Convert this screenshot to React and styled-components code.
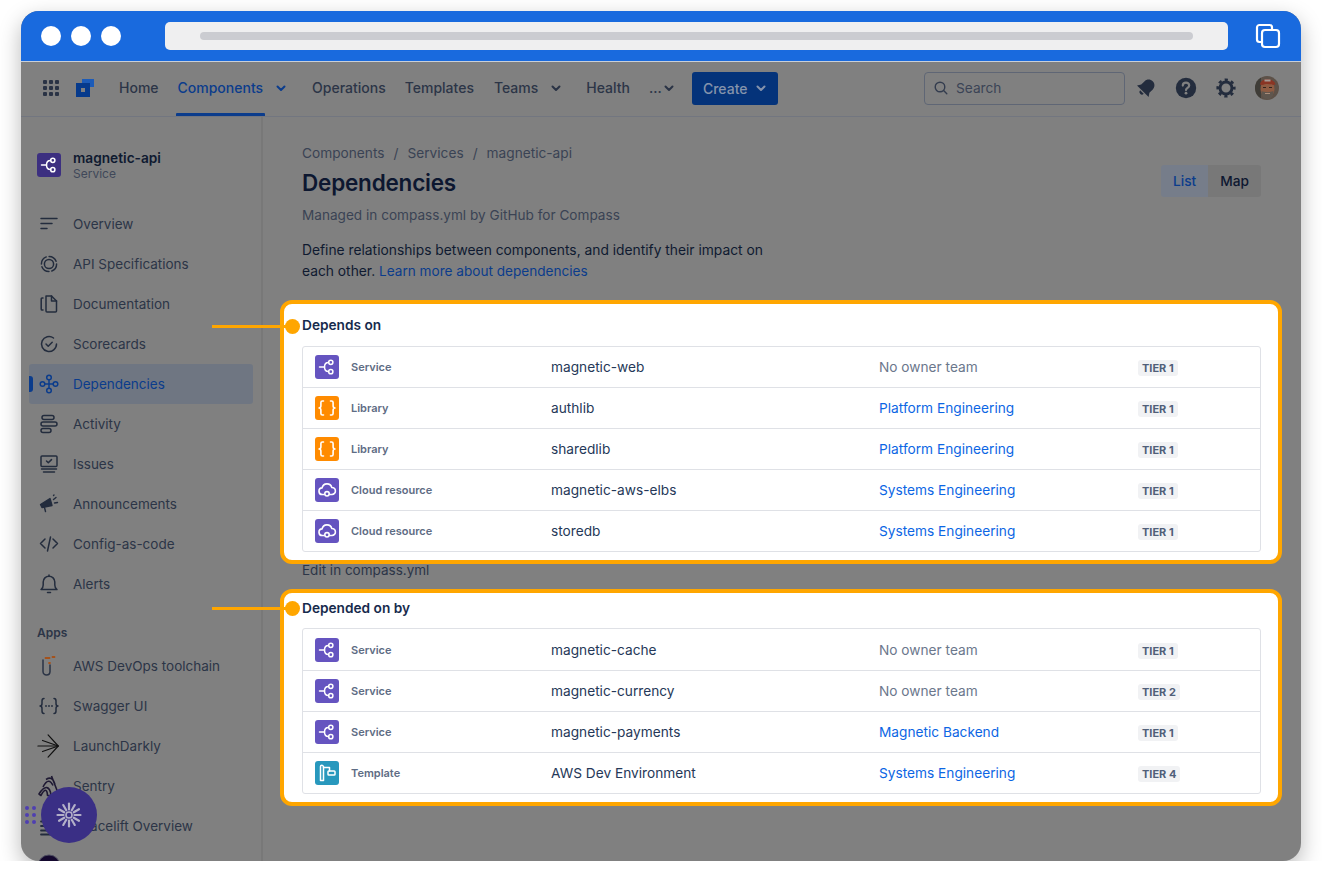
import React from 'react';
import styled, { createGlobalStyle } from 'styled-components';

const GlobalStyle = createGlobalStyle`
  html, body { margin: 0; padding: 0; background: #fff; }
  body { font-family: Inter, "Liberation Sans", sans-serif; -webkit-font-smoothing: antialiased; }
  * { box-sizing: border-box; }
`;

const ORANGE = '#FFA600';

/* icons */
const Svg = ({ size = 20, vb = '0 0 20 20', children, color = 'currentColor' }) => (
  <svg width={size} height={size} viewBox={vb} fill="none" stroke={color} strokeWidth="1.5" strokeLinecap="round" strokeLinejoin="round">
    {children}
  </svg>
);

const Chevron = ({ color = '#2A3345' }) => (
  <svg width="10" height="7" viewBox="0 0 10 7" fill="none" stroke={color} strokeWidth="2" strokeLinecap="round" strokeLinejoin="round">
    <path d="M1.5 1.5 5 5l3.5-3.5" />
  </svg>
);

const GridIcon = () => (
  <svg width="16" height="16" viewBox="0 0 16 16" fill="#2A3345">
    {[0, 6, 12].flatMap(y => [0, 6, 12].map(x => <rect key={`${x}-${y}`} x={x} y={y} width="4" height="4" rx="1" />))}
  </svg>
);

const LogoIcon = () => (
  <svg width="18" height="18" viewBox="0 0 18 18">
    <path fill="#063A8C" d="M0 4h14v14H0zM5 9v4h4V9z" fillRule="evenodd" />
    <path fill="#1C5BB8" d="M6 0h12v8h-4V4H6z" />
  </svg>
);

const CopyIcon = () => (
  <svg width="26" height="26" viewBox="0 0 26 26" fill="none" stroke="#fff" strokeWidth="2.2">
    <rect x="7" y="7" width="17" height="17" rx="3" />
    <path d="M7 19H4.5A2.5 2.5 0 0 1 2 16.500V4.500A2.500 2.500 0 0 1 4.500 2h10A2.500 2.500 0 0 1 17 4.500V7" />
  </svg>
);

const SearchIcon = () => (
  <svg width="14" height="14" viewBox="0 0 14 14" fill="none" stroke="#333C4E" strokeWidth="1.4" strokeLinecap="round">
    <circle cx="6" cy="6" r="4.8" />
    <path d="m9.600 9.600 3.200 3.200" />
  </svg>
);

const NavBell = () => (
  <svg width="20" height="20" viewBox="0 0 20 20" fill="#232C3D">
    <g transform="rotate(45 10 10)">
      <path d="M10 0.500c3.600 0 5.800 2.800 5.800 6v4.500l2.400 3.500H1.800L4.200 11V6.500c0-3.200 2.200-6 5.800-6z" />
      <path d="M7.500 15.800h5a2.500 2.500 0 0 1-5 0z" />
    </g>
  </svg>
);

const HelpIcon = () => (
  <svg width="22" height="22" viewBox="0 0 22 22">
    <circle cx="11" cy="11" r="10.200" fill="#232C3D" />
    <path d="M7.800 8.600c0-1.900 1.400-3 3.200-3s3.200 1.100 3.200 2.800c0 2.500-3.200 2.400-3.200 4.700" fill="none" stroke="#808080" strokeWidth="2.200" strokeLinecap="round" />
    <circle cx="11" cy="16.200" r="1.400" fill="#808080" />
  </svg>
);

const GearIcon = () => (
  <svg width="20" height="20" viewBox="0 0 20 20" fill="none" stroke="#232C3D">
    <circle cx="10" cy="10" r="6" strokeWidth="3" />
    <circle cx="10" cy="10" r="8.300" strokeWidth="2.600" strokeDasharray="3.200 3.320" strokeDashoffset="1.600" />
  </svg>
);

const Avatar = () => (
  <svg width="24" height="24" viewBox="0 0 24 24">
    <clipPath id="avatarClip"><circle cx="12" cy="12" r="12" /></clipPath>
    <g clipPath="url(#avatarClip)">
      <rect width="24" height="24" fill="#5d5148" />
      <path d="M0 0h6v24H0z" fill="#3f3d38" />
      <ellipse cx="12.500" cy="13" rx="7" ry="9" fill="#8f5b42" />
      <path d="M5 8.500C5.500 2 19 1 20.500 8.500L18 9c-3-1.500-8-1.500-10.500 0z" fill="#8a3524" />
      <path d="M9.500 3.500h6v2h-6z" fill="#a59a94" />
      <path d="M6.500 15c2.500 1.500 9.500 1.500 12 0 0 5-2 8-6 8s-6-3-6-8z" fill="#5f564e" />
      <path d="M10 17.500h5" stroke="#a98b78" strokeWidth="1.200" />
      <path d="M8 11.500h3M14 11.500h3" stroke="#33241e" strokeWidth="1" />
    </g>
  </svg>
);

const BranchGlyph = ({ color = '#fff', w = 1.5 }) => (
  <g fill="none" stroke={color} strokeWidth={w} strokeLinecap="round" strokeLinejoin="round">
    <path d="M4.500 12H9.500" />
    <path d="M13.500 7.500c-2.200 0-4 1.800-4 4.500s1.800 4.500 4 4.500" />
    <circle cx="15.800" cy="7.300" r="2.100" />
    <circle cx="15.800" cy="16.700" r="2.100" />
  </g>
);

const TileBox = styled.span`
  display: inline-flex;
  flex: none;
  width: 24px;
  height: 24px;
  border-radius: 3px;
  background: ${p => p.$bg};
`;

const Tile = ({ kind, bg }) => {
  const colors = { service: '#6554C0', library: '#FF8B00', cloud: '#6554C0', template: '#2898BD' };
  return (
    <TileBox $bg={bg || colors[kind]}>
      <svg width="24" height="24" viewBox="0 0 24 24">
        {kind === 'service' && <BranchGlyph />}
        {kind === 'library' && (
          <g fill="none" stroke="#fff" strokeWidth="1.600" strokeLinecap="round" strokeLinejoin="round">
            <path d="M8.500 5H7.400c-1 0-1.500.6-1.500 1.500v3.300c0 1.200-.7 2.200-1.900 2.200 1.200 0 1.900 1 1.900 2.200v3.300c0 .9.500 1.500 1.500 1.500h1.100" />
            <path d="M15.500 5h1.100c1 0 1.500.6 1.500 1.500v3.300c0 1.200.7 2.200 1.900 2.200-1.200 0-1.900 1-1.900 2.200v3.300c0 .9-.5 1.500-1.500 1.500h-1.100" />
          </g>
        )}
        {kind === 'cloud' && (
          <g fill="none" stroke="#fff" strokeWidth="1.600" strokeLinecap="round" strokeLinejoin="round">
            <path d="M9 16.500H7.500a3.300 3.300 0 0 1-.4-6.600 5 5 0 0 1 9.700-.4 3.500 3.500 0 0 1 .2 7H15" />
            <circle cx="12" cy="15.800" r="2.200" />
          </g>
        )}
        {kind === 'template' && (
          <g fill="none" stroke="#fff" strokeWidth="1.500" strokeLinecap="round" strokeLinejoin="round">
            <path d="M5.500 5.500c0-.8.600-1.300 1.300-1.300s1.300.5 1.700 1.300v14h-3z" />
            <path d="M8.500 6.500h6v3.500" />
            <rect x="13" y="10" width="7" height="4" rx=".8" />
          </g>
        )}
      </svg>
    </TileBox>
  );
};

const sideIcons = {
  overview: <Svg><path d="M2 4.500h16M2 9.500h11M2 14.500h6" /></Svg>,
  api: <Svg><circle cx="10" cy="10" r="4.600" /><circle cx="10" cy="10" r="7.600" strokeDasharray="9 2.900" /></Svg>,
  docs: <Svg><path d="M7 2h5.500L17.500 7v10a1 1 0 0 1-1 1H8a1 1 0 0 1-1-1z" /><path d="M12.500 2V7h5" /><path d="M4 4H3a.8.8 0 0 0-.8.800v10.400c0 .5.400.8.800.8h1" /></Svg>,
  score: <Svg><path d="M17.500 10a7.500 7.500 0 1 1-3-6" /><path d="m7 10 2.200 2.200 4-4" /></Svg>,
  deps: (
    <Svg color="#0B3C8C">
      <circle cx="10" cy="3.500" r="2.300" /><circle cx="3.500" cy="10" r="2.300" /><circle cx="16.500" cy="10" r="2.300" /><circle cx="10" cy="16.500" r="2.300" />
      <path d="M10 5.800v8.400M5.800 10h8.400" />
    </Svg>
  ),
  activity: <Svg><rect x="3" y="1.500" width="12" height="4" rx="2" /><rect x="2" y="8" width="16" height="4" rx="2" /><rect x="2" y="14.500" width="10" height="4" rx="2" /></Svg>,
  issues: (
    <Svg>
      <rect x="2" y="2" width="16" height="10.500" rx="1" />
      <path d="m7.500 7 1.800 1.800 3.200-3.200M2.500 15h15M4.500 18h11" />
    </Svg>
  ),
  announce: (
    <svg width="20" height="20" viewBox="0 0 20 20" fill="#232C3D" stroke="#232C3D" strokeWidth="1.400" strokeLinecap="round" strokeLinejoin="round">
      <path d="M1.500 10.500 11 4.500l2 7-10 2z" />
      <path d="m5.500 13.500 1 4" fill="none" />
      <path d="M14.500 5.500 17 3.500M15.500 9l3-.5M14.500 1.500l.5-.5" fill="none" />
    </svg>
  ),
  config: <Svg><path d="M6 5 1.500 9.500 6 14M14 5l4.500 4.500L14 14M11.500 3l-3 14" /></Svg>,
  alerts: <Svg><path d="M2 15.500c1.500-1 2.200-2.500 2.200-4.500V8a5.800 5.800 0 0 1 11.600 0v3c0 2 .7 3.500 2.200 4.500z" /><path d="M10 1v1M8.500 18.500h3" /></Svg>,
  aws: (
    <Svg>
      <path d="M4 4v11.500a3.500 3.500 0 0 0 3.500 3.500c2 0 3.500-1.500 3.500-3.500V9" stroke="#2A3345" />
      <path d="M6.500 2h4M13.500 1h2M10 7h1" stroke="#A5521B" strokeWidth="1.800" />
    </Svg>
  ),
  swagger: (
    <Svg>
      <path d="M5 2.500c-2 0-2 1-2 2.500v2.500C3 9 2 10 1 10c1 0 2 1 2 2.500V15c0 1.500 0 2.500 2 2.500M15 2.500c2 0 2 1 2 2.500v2.500c0 1.500 1 2.500 2 2.500-1 0-2 1-2 2.500V15c0 1.500 0 2.500-2 2.500" />
      <path d="M7 10h.01M10 10h.01M13 10h.01" strokeWidth="1.800" />
    </Svg>
  ),
  launch: (
    <svg width="26" height="26" viewBox="0 0 26 26" fill="none" stroke="#111" strokeWidth="1.300" strokeLinecap="round" strokeLinejoin="round">
      <path d="M1 13h22" /><path d="M12 1l11 12-11 12" /><path d="M6 7l17 6-17 6" />
    </svg>
  ),
  sentry: (
    <svg width="22" height="22" viewBox="0 0 22 22" fill="none" stroke="#1F1A33" strokeWidth="1.600" strokeLinejoin="round">
      <path d="M1 19l2 1.500c3-6 6-8 6.500 0H13C12 11 7 9.500 1 19z" />
      <path d="M13.500 1 21 20.500h-5M5 12C9 4 12.500 5 15 10.500M8 4.500c4-2.500 7-2 9 5" />
    </svg>
  ),
  spacelift: <Svg><path d="M2 5.500h16M2 10h16M2 14.500h16M2 18.500h16" strokeWidth="1.800" /></Svg>,
  last: (
    <svg width="24" height="24" viewBox="0 0 24 24"><circle cx="12" cy="12" r="11" fill="#14082E" stroke="#4d4d60" /></svg>
  ),
};

const mainItems = [
  ['overview', 'Overview'], ['api', 'API Specifications'], ['docs', 'Documentation'], ['score', 'Scorecards'],
  ['deps', 'Dependencies', true], ['activity', 'Activity'], ['issues', 'Issues'], ['announce', 'Announcements'],
  ['config', 'Config-as-code'], ['alerts', 'Alerts'],
];
const appItems = [
  ['aws', 'AWS DevOps toolchain'], ['swagger', 'Swagger UI'], ['launch', 'LaunchDarkly'], ['sentry', 'Sentry'],
  ['spacelift', 'Spacelift Overview'], ['last', ''],
];

const dependsOn = [
  ['service', 'Service', 'magnetic-web', 'No owner team', 'TIER 1'],
  ['library', 'Library', 'authlib', 'Platform Engineering', 'TIER 1'],
  ['library', 'Library', 'sharedlib', 'Platform Engineering', 'TIER 1'],
  ['cloud', 'Cloud resource', 'magnetic-aws-elbs', 'Systems Engineering', 'TIER 1'],
  ['cloud', 'Cloud resource', 'storedb', 'Systems Engineering', 'TIER 1'],
];
const dependedOnBy = [
  ['service', 'Service', 'magnetic-cache', 'No owner team', 'TIER 1'],
  ['service', 'Service', 'magnetic-currency', 'No owner team', 'TIER 2'],
  ['service', 'Service', 'magnetic-payments', 'Magnetic Backend', 'TIER 1'],
  ['template', 'Template', 'AWS Dev Environment', 'Systems Engineering', 'TIER 4'],
];

const DepTable = ({ rows, firstRow = 40 }) => (
  <Table>
    {rows.map(([kind, type, name, team, tier]) => (
      <Row key={name} $first={firstRow}>
        <TypeCell><Tile kind={kind} /><TypeLabel>{type}</TypeLabel></TypeCell>
        <NameCell>{name}</NameCell>
        <TeamCell $none={team === 'No owner team'}>{team}</TeamCell>
        <TierCell><TierBadge>{tier}</TierBadge></TierCell>
      </Row>
    ))}
  </Table>
);

const App = () => (
  <>
    <GlobalStyle />
    <Window>
      <BrowserBar>
        <Dots><Dot /><Dot /><Dot /></Dots>
        <AddressBar><AddressFill /></AddressBar>
        <CopyIcon />
      </BrowserBar>

      <TopNav>
        <GridIcon />
        <LogoSlot><LogoIcon /></LogoSlot>
        <NavItem $left={25}>Home</NavItem>
        <NavItem $left={19} $active>Components<Underline /></NavItem>
        <ChevSlot $left={13}><Chevron color="#0B3C8C" /></ChevSlot>
        <NavItem $left={26}>Operations</NavItem>
        <NavItem $left={19}>Templates</NavItem>
        <NavItem $left={20}>Teams</NavItem>
        <ChevSlot $left={13}><Chevron /></ChevSlot>
        <NavItem $left={25}>Health</NavItem>
        <NavItem $left={19}>...</NavItem>
        <ChevSlot $left={2}><Chevron /></ChevSlot>
        <CreateButton>Create <Chevron color="#8593AC" /></CreateButton>
        <SearchBox><SearchIcon /><span>Search</span></SearchBox>
        <NavIcons>
          <NavBell />
          <HelpIcon />
          <GearIcon />
          <Avatar />
        </NavIcons>
      </TopNav>

      <Body>
        <Sidebar>
          <SideHeader>
            <Tile kind="service" bg="#3C2F80" />
            <div>
              <SideName>magnetic-api</SideName>
              <SideType>Service</SideType>
            </div>
          </SideHeader>
          {mainItems.map(([icon, label, active]) => (
            <SideItem key={label} $active={active}>
              <SideIcon>{sideIcons[icon]}</SideIcon>
              {label}
            </SideItem>
          ))}
          <SideSection>Apps</SideSection>
          {appItems.map(([icon, label]) => (
            <SideItem key={icon}>
              <SideIcon>{sideIcons[icon]}</SideIcon>
              {label}
            </SideItem>
          ))}
        </Sidebar>

        <Content>
          <Breadcrumbs>
            <span>Components</span><i>/</i><span>Services</span><i>/</i><span>magnetic-api</span>
          </Breadcrumbs>
          <TitleRow>
            <Title>Dependencies</Title>
            <Toggle>
              <ToggleBtn $on>List</ToggleBtn>
              <ToggleBtn>Map</ToggleBtn>
            </Toggle>
          </TitleRow>
          <Managed>Managed in compass.yml by GitHub for Compass</Managed>
          <Intro>
            Define relationships between components, and identify their impact on<br />
            each other. <IntroLink>Learn more about dependencies</IntroLink>
          </Intro>

          <HighlightCard $top={18}>
            <Callout $top={14.5} />
            <SectionTitle>Depends on</SectionTitle>
            <DepTable rows={dependsOn} />
          </HighlightCard>
          <EditLink>Edit in compass.yml</EditLink>
          <HighlightCard $top={13}>
            <Callout $top={7.5} />
            <SectionTitle $tight>Depended on by</SectionTitle>
            <DepTable rows={dependedOnBy} firstRow={41} />
          </HighlightCard>
        </Content>
      </Body>

      <FloatWrap>
        <DragDots>{Array.from({ length: 6 }, (_, i) => <i key={i} />)}</DragDots>
        <FloatButton>
          <svg width="26" height="26" viewBox="0 0 26 26" stroke="#B3B0C8" strokeWidth="2.200" strokeLinecap="round">
            {Array.from({ length: 12 }, (_, i) => {
              const a = (i * Math.PI) / 6;
              return <line key={i} x1={13 + 5.5 * Math.cos(a)} y1={13 + 5.5 * Math.sin(a)} x2={13 + 11.500 * Math.cos(a)} y2={13 + 11.500 * Math.sin(a)} />;
            })}
            <circle cx="13" cy="13" r="3" fill="#3A2F85" strokeWidth="1.600" />
          </svg>
        </FloatButton>
      </FloatWrap>
    </Window>
  </>
);

export default App;

const Window = styled.div`
  position: relative;
  width: 1280px;
  height: 850px;
  margin: 11px 0 0 21px;
  border-radius: 18px;
  overflow: hidden;
  background: #808080;
  box-shadow: 0 8px 22px rgba(0, 0, 0, 0.28);
  display: flex;
  flex-direction: column;
`;

const BrowserBar = styled.div`
  flex: none;
  height: 51px;
  background: #196ADE;
  border-bottom: 1px solid #C9CFD8;
  display: flex;
  align-items: center;
  padding: 0 20px 0 20px;
`;

const Dots = styled.div`
  display: flex;
  gap: 10px;
`;

const Dot = styled.span`
  width: 20px;
  height: 20px;
  border-radius: 50%;
  background: #fff;
`;

const AddressBar = styled.div`
  width: 1063px;
  height: 28px;
  margin: 0 27px 0 44px;
  background: #EFEFF0;
  border-radius: 5px;
  display: flex;
  align-items: center;
  padding: 0 35px;
`;

const AddressFill = styled.div`
  flex: 1;
  height: 8px;
  border-radius: 4px;
  background: #CBCCD1;
`;

const TopNav = styled.div`
  flex: none;
  height: 55px;
  border-bottom: 1px solid #727680;
  display: flex;
  align-items: center;
  padding: 0 22px 2px;
`;

const LogoSlot = styled.span`
  display: inline-flex;
  margin-left: 17px;
`;

const NavItem = styled.span`
  position: relative;
  margin-left: ${p => p.$left}px;
  font-size: 14px;
  font-weight: 500;
  line-height: 52px;
  color: ${p => (p.$active ? '#0B3C8C' : '#2C3547')};
`;

const Underline = styled.span`
  position: absolute;
  left: -2px;
  right: -2px;
  bottom: -2px;
  height: 3px;
  background: #0B3C8C;
  border-radius: 1px 1px 0 0;
`;

const ChevSlot = styled.span`
  display: inline-flex;
  margin-left: ${p => p.$left}px;
`;

const CreateButton = styled.span`
  margin-left: 18px;
  width: 86px;
  height: 33px;
  border-radius: 3px;
  background: #04337A;
  color: #8593AC;
  font-size: 14px;
  font-weight: 500;
  display: flex;
  align-items: center;
  justify-content: center;
  gap: 9px;
`;

const SearchBox = styled.div`
  margin-left: auto;
  width: 201px;
  height: 33px;
  border: 1px solid #5F6675;
  border-radius: 4px;
  display: flex;
  align-items: center;
  gap: 8px;
  padding-left: 9px;
  color: #3B4456;
  font-size: 13.700px;
`;

const NavIcons = styled.div`
  display: flex;
  align-items: center;
  gap: 19px;
  margin-left: 11px;
`;

const Body = styled.div`
  flex: 1;
  min-height: 0;
  display: flex;
`;

const Sidebar = styled.aside`
  flex: none;
  width: 242px;
  padding: 35px 8px 0;
  border-right: 2px solid #787878;
  overflow: hidden;
`;

const SideHeader = styled.div`
  display: flex;
  align-items: center;
  gap: 12px;
  padding: 0 0 0 8px;
  height: 26px;
  margin-bottom: 25.500px;
`;

const SideName = styled.div`
  font-size: 13.700px;
  line-height: 16px;
  font-weight: 600;
  color: #0F1A30;
`;

const SideType = styled.div`
  font-size: 12px;
  line-height: 15px;
  color: #3F4859;
`;

const SideItem = styled.div`
  position: relative;
  display: flex;
  align-items: center;
  height: 40.100px;
  width: 224px;
  padding-left: 8px;
  font-size: 13.500px;
  color: ${p => (p.$active ? '#0B3C8C' : '#2C3547')};
  background: ${p => (p.$active ? '#6F7682' : 'transparent')};
  border-radius: 3px;
  &::before {
    content: '';
    display: ${p => (p.$active ? 'block' : 'none')};
    position: absolute;
    left: 0;
    top: 12px;
    width: 4px;
    height: 16px;
    background: #0B3C8C;
    border-radius: 0 3px 3px 0;
  }
`;

const SideIcon = styled.span`
  flex: none;
  width: 36px;
  padding-right: 12px;
  display: flex;
  align-items: center;
  justify-content: center;
  color: #232C3D;
`;

const SideSection = styled.div`
  margin: 20.500px 0 5px 8px;
  font-size: 12px;
  line-height: 16px;
  font-weight: 600;
  color: #2C3547;
`;

const Content = styled.main`
  flex: 1;
  min-width: 0;
  padding: 27px 40px 0 39px;
`;

const Breadcrumbs = styled.div`
  display: flex;
  gap: 9px;
  font-size: 13.700px;
  line-height: 18px;
  color: #3A4354;
  i { font-style: normal; }
`;

const TitleRow = styled.div`
  display: flex;
  align-items: flex-start;
  justify-content: space-between;
  margin-top: 5px;
  height: 38px;
`;

const Title = styled.h1`
  margin: 0;
  font-size: 22.500px;
  line-height: 32px;
  font-weight: 600;
  letter-spacing: -0.2px;
  color: #0D1730;
`;

const Toggle = styled.div`
  display: flex;
  margin-top: -2px;
  border-radius: 3px;
  overflow: hidden;
`;

const ToggleBtn = styled.span`
  height: 32px;
  display: flex;
  align-items: center;
  padding: 0 12px;
  font-size: 13.700px;
  font-weight: 500;
  background: ${p => (p.$on ? '#767D8A' : '#787878')};
  color: ${p => (p.$on ? '#0B3C8C' : '#0D1730')};
`;

const Managed = styled.div`
  margin-top: 1px;
  font-size: 13.600px;
  line-height: 18px;
  color: #3A4354;
`;

const Intro = styled.p`
  margin: 16px 0 0;
  font-size: 13.800px;
  line-height: 21px;
  color: #0F1A30;
`;

const IntroLink = styled.span`
  color: #0B3C8C;
  font-size: 13.600px;
`;

const HighlightCard = styled.section`
  position: relative;
  margin: ${p => p.$top}px -21px 0 -22px;
  padding: 0 17px 8px 18px;
  border: 4px solid ${ORANGE};
  border-radius: 12px;
  background: #fff;
`;

const Callout = styled.span`
  position: absolute;
  left: 1px;
  top: ${p => p.$top}px;
  width: 15px;
  height: 15px;
  border-radius: 50%;
  background: ${ORANGE};
  &::before {
    content: '';
    position: absolute;
    right: 13px;
    top: 6px;
    width: 75px;
    height: 3px;
    background: ${ORANGE};
  }
`;

const SectionTitle = styled.h2`
  margin: 0;
  height: ${p => (p.$tight ? '35px' : '42px')};
  padding-top: ${p => (p.$tight ? '6px' : '12px')};
  font-size: 13.700px;
  line-height: 18px;
  font-weight: 600;
  color: #172B4D;
`;

const Table = styled.div`
  border: 1px solid #DFE1E6;
  border-radius: 3px;
`;

const Row = styled.div`
  display: grid;
  grid-template-columns: 248px 328px 259px 1fr;
  align-items: center;
  height: 41px;
  &:first-child { height: ${p => p.$first}px; }
  & + & { border-top: 1px solid #DFE1E6; }
`;

const TypeCell = styled.div`
  display: flex;
  align-items: center;
  gap: 12px;
  padding-left: 12px;
`;

const TypeLabel = styled.span`
  font-size: 11px;
  font-weight: 600;
  color: #5E6C84;
`;

const NameCell = styled.div`
  font-size: 13.700px;
  color: #253858;
`;

const TeamCell = styled.div`
  font-size: 13.700px;
  color: ${p => (p.$none ? '#6B778C' : '#0C66E4')};
`;

const TierCell = styled.div`
  display: flex;
  margin-top: 2px;
`;

const TierBadge = styled.span`
  padding: 0 4px;
  height: 16px;
  line-height: 16px;
  font-size: 11px;
  font-weight: 700;
  color: #505F79;
  background: #F1F2F4;
  border-radius: 3px;
`;

const EditLink = styled.div`
  height: 12px;
  font-size: 13.500px;
  line-height: 12px;
  color: #2C3547;
`;

const FloatWrap = styled.div`
  position: absolute;
  left: 4px;
  top: 776px;
  display: flex;
  align-items: center;
  gap: 5px;
`;

const DragDots = styled.div`
  display: grid;
  grid-template-columns: 4px 4px;
  gap: 3px 3px;
  i { width: 4px; height: 4px; border-radius: 50%; background: #4F3FB0; }
`;

const FloatButton = styled.div`
  width: 56px;
  height: 56px;
  border-radius: 50%;
  background: #3A2F85;
  display: flex;
  align-items: center;
  justify-content: center;
`;
